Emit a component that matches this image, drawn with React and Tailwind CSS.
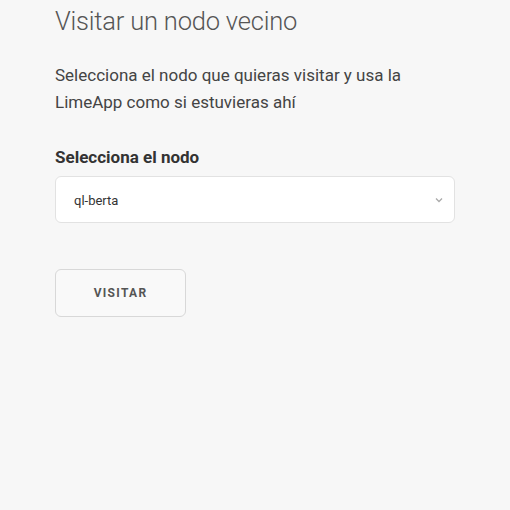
export default function App() {
  return (
    <div className="w-[510px] h-[510px] bg-[#f7f7f7] overflow-hidden" style={{ fontFamily: 'Roboto, "Noto Sans", sans-serif' }}>
      <div className="px-[55px] w-[510px]">
        <h1 className="text-[25.5px] font-light text-[#555] leading-[30px] pt-[6px] tracking-[-0.2px]">Visitar un nodo vecino</h1>
        <p className="mt-[26px] text-[17px] leading-[27px] text-[#444]">
          Selecciona el nodo que quieras visitar y usa la LimeApp como si estuvieras ahí
        </p>
        <div className="mt-[31px] text-[17px] font-bold text-[#333] leading-[20px]">Selecciona el nodo</div>
        <div className="mt-[9px] w-[400px] h-[47px] bg-white border border-[#e2e2e2] rounded-[6px] flex items-center justify-between pl-[18px] pr-[10px]">
          <span className="text-[13px] text-[#333] pt-[3px]">ql-berta</span>
          <svg width="8" height="6" viewBox="0 0 8 6" className="mr-[1px]">
            <path d="M1 1.5 L4 4.5 L7 1.5" fill="none" stroke="#aaa" strokeWidth="1.3" />
          </svg>
        </div>
        <button className="mt-[46px] w-[131px] h-[48px] border border-[#d8d8d8] rounded-[6px] bg-[#f9f9f9] text-[12px] font-bold tracking-[1.3px] text-[#555] flex items-center justify-center">
          VISITAR
        </button>
      </div>
    </div>
  );
}
